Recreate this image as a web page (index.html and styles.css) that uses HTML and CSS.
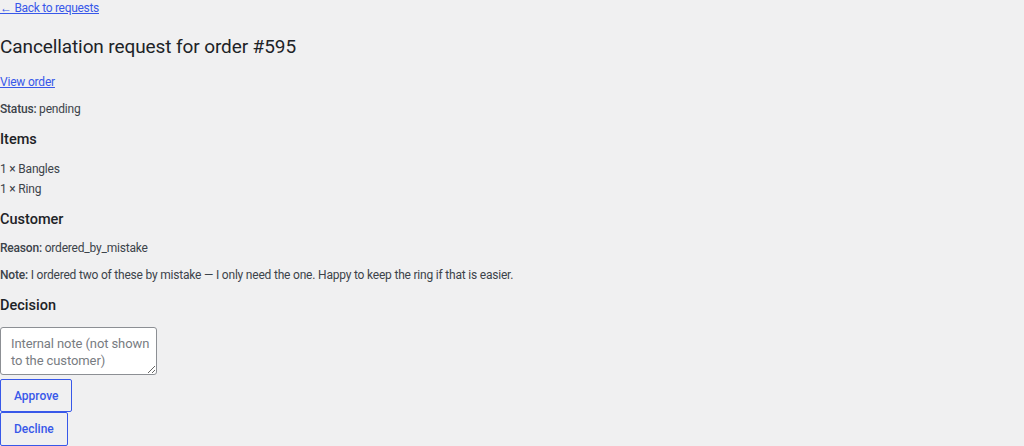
FILE: index.html
```html
<!DOCTYPE html>
<html lang="en">
<head>
<meta charset="utf-8">
<title>Cancellation request</title>
<link rel="stylesheet" href="styles.css">
</head>
<body>
<div class="wrap">
  <p class="back"><a href="#">← Back to requests</a></p>
  <h1 class="title">Cancellation request for order #595</h1>
  <p class="line view"><a href="#">View order</a></p>
  <p class="line"><strong>Status:</strong> pending</p>
  <h2 class="section">Items</h2>
  <div class="items">
    <div class="item">1 × Bangles</div>
    <div class="item">1 × Ring</div>
  </div>
  <h2 class="section after-items">Customer</h2>
  <p class="line reason"><strong>Reason:</strong> ordered_by_mistake</p>
  <p class="line"><strong>Note:</strong> I ordered two of these by mistake — I only need the one. Happy to keep the ring if that is easier.</p>
  <h2 class="section">Decision</h2>
  <form class="decision">
    <textarea class="note-input" placeholder="Internal note (not shown to the customer)"></textarea>
    <div class="actions">
      <button type="button" class="btn btn-approve">Approve</button>
      <button type="button" class="btn btn-decline">Decline</button>
    </div>
  </form>
</div>
</body>
</html>
```

FILE: styles.css
```css
html, body {
  margin: 0;
  padding: 0;
  background: #f0f0f1;
}
body {
  font-family: "Roboto", "Liberation Sans", sans-serif;
  font-size: 12px;
  letter-spacing: -0.2px;
  color: #3c434a;
  line-height: 18px;
}
a {
  color: #3858e9;
  text-decoration: underline;
}
.wrap {
  display: flex;
  flex-direction: column;
  align-items: flex-start;
}
.back {
  margin: 0;
  line-height: 16px;
  letter-spacing: -0.3px;
}
.title {
  margin: 16px 0 0;
  font-size: 19px;
  font-weight: 400;
  line-height: 30px;
  letter-spacing: -0.1px;
  color: #1d2327;
}
.line {
  margin: 9px 0 0;
}
.line strong {
  font-weight: 500;
}
.view {
  margin-top: 11px;
}
.section {
  margin: 10px 0 0;
  font-size: 14.5px;
  font-weight: 500;
  line-height: 24px;
  letter-spacing: 0;
  color: #1d2327;
}
.after-items {
  margin-top: 9px;
}
.items {
  margin-top: 7px;
}
.item {
  line-height: 20px;
}
.reason {
  margin-top: 7px;
}
.decision {
  margin: 9px 0 0;
  display: flex;
  flex-direction: column;
  align-items: flex-start;
  gap: 4px;
}
.note-input {
  box-sizing: border-box;
  width: 157px;
  height: 48px;
  margin: 0;
  padding: 7px 4px 7px 10px;
  border: 1px solid #8c8f94;
  border-radius: 3px;
  background: #fff;
  font-family: inherit;
  font-size: 13px;
  letter-spacing: -0.1px;
  line-height: 17px;
  color: #2c3338;
  resize: vertical;
  overflow: hidden;
}
.note-input::placeholder {
  color: #787c82;
}
.actions {
  display: flex;
  flex-direction: column;
  align-items: flex-start;
}
.btn {
  box-sizing: border-box;
  height: 34px;
  margin: 0;
  padding: 0 13px;
  border: 1px solid #3858e9;
  border-radius: 2px;
  background: #f0f0f1;
  color: #3858e9;
  font-family: inherit;
  font-size: 12px;
  font-weight: 500;
  letter-spacing: 0;
  cursor: pointer;
}
.btn-approve {
  height: 33px;
}
```
